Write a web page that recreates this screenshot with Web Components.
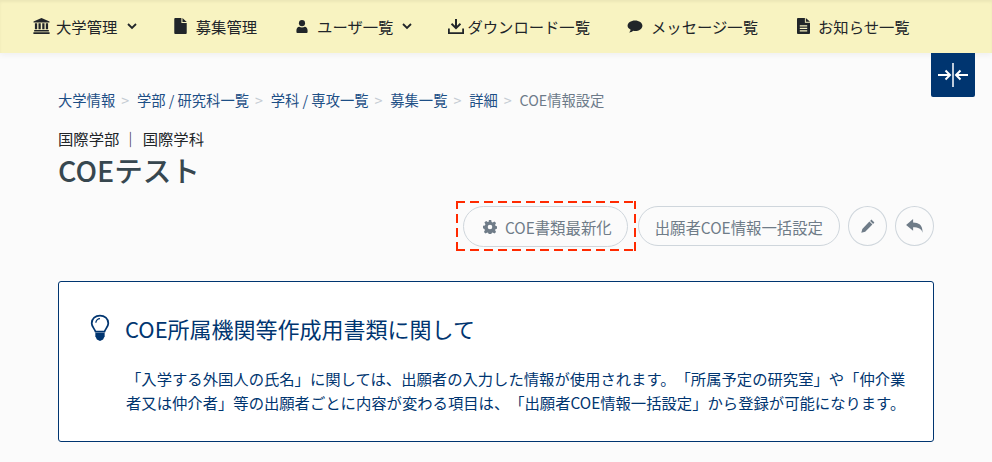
<!DOCTYPE html>
<html lang="ja">
<head>
<meta charset="utf-8">
<title>COE情報設定</title>
<style>
  html, body { margin: 0; padding: 0; }
  body {
    background: #fbfbfb;
    width: 992px;
    height: 462px;
    overflow: hidden;
    font-family: "Noto Sans CJK JP", "Noto Sans", sans-serif;
    color: #212529;
    text-spacing-trim: space-all;
  }
</style>
</head>
<body>
<top-nav>
  <nav-item icon="bank" gap="6" caret="3.4">大学管理</nav-item>
  <nav-item icon="file" gap="9" style="margin-left:37px">募集管理</nav-item>
  <nav-item icon="user" gap="9" caret="0" style="margin-left:39px">ユーザ一覧</nav-item>
  <nav-item icon="download" gap="3" style="margin-left:36px">ダウンロード一覧</nav-item>
  <nav-item icon="comment" gap="8" style="margin-left:37px">メッセージ一覧</nav-item>
  <nav-item icon="doc" gap="8" style="margin-left:39px">お知らせ一覧</nav-item>
</top-nav>
<page-main>
  <bread-crumbs>
    <a>大学情報</a><a>学部 / 研究科一覧</a><a>学科 / 専攻一覧</a><a>募集一覧</a><a>詳細</a><span>COE情報設定</span>
  </bread-crumbs>
  <page-title><span slot="sub">国際学部<i style="font-style:normal;margin:0 4.5px 0 3.5px">｜</i>国際学科</span>COEテスト</page-title>
  <action-bar>
    <highlight-box><pill-button icon="gear" style="height:41px">COE書類最新化</pill-button></highlight-box>
    <pill-button style="margin-left:2px">出願者COE情報一括設定</pill-button>
    <round-button icon="pencil" style="margin-left:8px"></round-button>
    <round-button icon="reply" style="margin-left:8px"></round-button>
  </action-bar>
  <info-box heading="COE所属機関等作成用書類に関して">「入学する外国人の氏名」に関しては、出願者の入力した情報が使用されます。「所属予定の研究室」や「仲介業者又は仲介者」等の出願者ごとに内容が変わる項目は、「出願者COE情報一括設定」から登録が可能になります。</info-box>
</page-main>
<script>
const ICONS = {
  bank: `<svg width="17" height="16" viewBox="0 0 18 17"><path fill="currentColor" d="M9 0 17.500 3.600v1.200H.5V3.600zM2 5.600h2.400v6.400H2zm3.800 0h2.400v6.400H5.800zm4 0h2.400v6.400H9.800zm3.800 0H16v6.400h-2.400zM1.200 12.800h15.600v1.600H1.200zM.4 15.200h17.200V17H.4z"/></svg>`,
  file: `<svg width="13" height="16" viewBox="0 0 14 18"><path fill="currentColor" d="M1 0h7v5.500h6V17a1 1 0 0 1-1 1H1a1 1 0 0 1-1-1V1a1 1 0 0 1 1-1zm8.200 0L14 4.400H9.200z"/></svg>`,
  user: `<svg width="12" height="13" viewBox="0 0 12 14"><circle fill="currentColor" cx="6" cy="3.400" r="3.300"/><path fill="currentColor" d="M3 7.400c1.800 1 4.200 1 6 0 1.900.2 3 1.800 3 4V13a1 1 0 0 1-1 1H1a1 1 0 0 1-1-1v-1.600c0-2.200 1.100-3.800 3-4z"/></svg>`,
  download: `<svg width="16" height="15" viewBox="0 0 16 15"><path fill="currentColor" d="M7 0h2v6.800l2.800-2.700 1.300 1.300L8 10.400 2.900 5.400l1.300-1.300L7 6.800zM0 9.500h1.800v3.700h12.400V9.500H16V15H0z"/></svg>`,
  comment: `<svg width="16" height="13" viewBox="0 0 16 14"><path fill="currentColor" d="M8 .5c4.400 0 8 2.500 8 5.700s-3.600 5.700-8 5.700c-.7 0-1.300 0-1.900-.2C4.800 12.800 3.300 13.500 1.600 13.500c.9-.9 1.500-2 1.700-3.100C1.300 9.300 0 7.900 0 6.200 0 3 3.600.5 8 .5z"/></svg>`,
  doc: `<svg width="13" height="16" viewBox="0 0 14 17"><path fill="currentColor" fill-rule="evenodd" d="M1 0h7.500v5H14v11a1 1 0 0 1-1 1H1a1 1 0 0 1-1-1V1a1 1 0 0 1 1-1zm8.500 0L14 4H9.500zM3 7.800v1.300h8V7.800zm0 2.700v1.300h8v-1.300zm0 2.700v1.300h8v-1.300z"/></svg>`,
  gear: `<svg width="14" height="14" viewBox="0 0 14 14"><path fill="currentColor" fill-rule="evenodd" d="M5.800 0h2.400l.4 1.900 1.100.5 1.700-1 1.700 1.700-1 1.700.5 1.100 1.900.4v2.400l-1.900.4-.5 1.100 1 1.700-1.700 1.700-1.700-1-1.100.5-.4 1.900H5.800l-.4-1.900-1.100-.5-1.700 1-1.700-1.700 1-1.700-.5-1.100L0 8.200V5.800l1.900-.4.5-1.100-1-1.700 1.700-1.700 1.700 1 1.100-.5zM7 4.700a2.300 2.300 0 1 0 0 4.600 2.300 2.300 0 0 0 0-4.600z"/></svg>`,
  pencil: `<svg width="14" height="14" viewBox="0 0 14 14"><path fill="currentColor" d="M10.400.6l3 3-1.300 1.300-3-3zM8.400 2.600l3 3-7.200 7.200-3.900 1 1-3.900z"/></svg>`,
  reply: `<svg width="17" height="14" viewBox="0 0 18 15"><path fill="currentColor" d="M7.500 0v3.700C13.200 3.800 18 6 17.600 14.600c-1.100-4.300-4.500-5.600-10.100-5.700v3.800L0 6.300z"/></svg>`
};

class TopNav extends HTMLElement {
  constructor() {
    super();
    this.attachShadow({ mode: "open" }).innerHTML = `
      <style>
        :host {
          display: flex;
          align-items: center;
          box-sizing: border-box;
          height: 53px;
          padding: 0 0 1px 33px;
          background: #f8f3c1;
          box-shadow: 0 2px 6px rgba(0,0,0,.05), inset 0 2px 3px rgba(0,0,0,.05);
        }
      </style>
      <slot></slot>`;
  }
}

class NavItem extends HTMLElement {
  constructor() {
    super();
    this.attachShadow({ mode: "open" });
  }
  connectedCallback() {
    const caret = this.hasAttribute("caret")
      ? `<svg class="caret" style="margin-left:${this.getAttribute("caret")}px" width="10" height="7" viewBox="0 0 10 7"><path fill="none" stroke="currentColor" stroke-width="1.800" d="M1 1l4 4 4-4"/></svg>` : "";
    this.shadowRoot.innerHTML = `
      <style>
        :host {
          display: inline-flex;
          align-items: center;
          gap: ${this.getAttribute("gap")}px;
          font-size: 15.33px;
          line-height: 20px;
          color: #212529;
          white-space: nowrap;
        }
        svg { display: block; flex: none; }
      </style>
      ${ICONS[this.getAttribute("icon")]}<slot></slot>${caret}`;
  }
}

class PageMain extends HTMLElement {
  constructor() {
    super();
    this.attachShadow({ mode: "open" }).innerHTML = `
      <style>
        :host { display: flex; flex-direction: column; padding: 35px 58px 0; position: relative; }
        .toggle {
          position: absolute; top: 0; right: 17px; width: 44px; height: 44px;
          background: #003570; border-radius: 0 0 2px 2px; color: #fff;
          display: flex; align-items: center; justify-content: center;
        }
      </style>
      <div class="toggle">
        <svg width="30" height="24" viewBox="0 0 30 24"><path fill="none" stroke="#fff" stroke-width="2" d="M0 12h12M7.500 7.500 12 12l-4.500 4.500M30 12H18M22.500 7.500 18 12l4.500 4.500"/><path stroke="#fff" stroke-width="1.500" d="M15 0v24"/></svg>
      </div>
      <slot></slot>`;
  }
}

class BreadCrumbs extends HTMLElement {
  constructor() {
    super();
    this.attachShadow({ mode: "open" }).innerHTML = `
      <style>
        :host { display: flex; align-items: center; height: 22px; font-size: 14.3px; white-space: nowrap; color: #6c7a89; }
        ::slotted(a) { color: #1d4f86; }
        ::slotted(a)::after { content: ">"; color: #c5ccd3; margin: 0 7.8px 0 6px; }
      </style>
      <slot></slot>`;
  }
}

class PageTitle extends HTMLElement {
  constructor() {
    super();
    this.attachShadow({ mode: "open" }).innerHTML = `
      <style>
        :host { display: block; margin-top: 17px; }
        .sub { font-size: 15.33px; line-height: 22px; color: #212529; }
        h1 { margin: 1px 0 0; font-size: 28.6px; line-height: 40px; font-weight: 500; color: #37474f; }
      </style>
      <div class="sub"><slot name="sub"></slot></div>
      <h1><slot></slot></h1>`;
  }
}

class ActionBar extends HTMLElement {
  constructor() {
    super();
    this.attachShadow({ mode: "open" }).innerHTML = `
      <style>
        :host { display: flex; justify-content: flex-end; align-items: center; margin-top: 11px; height: 50px; }
      </style>
      <slot></slot>`;
  }
}

class HighlightBox extends HTMLElement {
  constructor() {
    super();
    this.attachShadow({ mode: "open" }).innerHTML = `
      <style>
        :host {
          display: flex; align-items: center; height: 50px; box-sizing: border-box; padding: 0 8px 0 7px;
          background:
            repeating-linear-gradient(90deg, #ff2a00 0 9px, transparent 9px 14px) top left / 100% 2px no-repeat,
            repeating-linear-gradient(90deg, #ff2a00 0 9px, transparent 9px 14px) bottom left / 100% 2px no-repeat,
            repeating-linear-gradient(0deg, #ff2a00 0 9px, transparent 9px 14px) top left / 2px 100% no-repeat,
            repeating-linear-gradient(0deg, #ff2a00 0 9px, transparent 9px 14px) top right / 2px 100% no-repeat;
        }
      </style>
      <slot></slot>`;
  }
}

class PillButton extends HTMLElement {
  constructor() {
    super();
    this.attachShadow({ mode: "open" });
  }
  connectedCallback() {
    const icon = this.getAttribute("icon");
    this.shadowRoot.innerHTML = `
      <style>
        :host {
          display: inline-flex; align-items: center; gap: 8px; height: 40px; box-sizing: border-box;
          padding: 1px ${icon ? 15 : 16}px 0 ${icon ? 19 : 16}px; border: 1px solid #cfd6dc; border-radius: 21px;
          font-size: 15.4px; color: #6f7c88; white-space: nowrap;
        }
        svg { display: block; }
      </style>
      ${icon ? ICONS[icon] : ""}<slot></slot>`;
  }
}

class RoundButton extends HTMLElement {
  constructor() {
    super();
    this.attachShadow({ mode: "open" });
  }
  connectedCallback() {
    this.shadowRoot.innerHTML = `
      <style>
        :host {
          display: inline-flex; align-items: center; justify-content: center; width: 39px; height: 40px;
          box-sizing: border-box; border: 1px solid #cfd6dc; border-radius: 50%; color: #6f7c88;
        }
        svg { display: block; }
      </style>
      ${ICONS[this.getAttribute("icon")]}`;
  }
}

class InfoBox extends HTMLElement {
  constructor() {
    super();
    this.attachShadow({ mode: "open" });
  }
  connectedCallback() {
    this.shadowRoot.innerHTML = `
      <style>
        :host {
          display: block; margin-top: 30px; height: 161px; box-sizing: border-box;
          border: 1px solid #003570; border-radius: 3px; background: #fff; color: #003570;
          padding: 28px 20px 0 31px;
        }
        .head { display: flex; align-items: center; gap: 15px; height: 36px; }
        h2 { margin: 0; font-size: 22px; font-weight: 400; line-height: 36px; }
        svg { display: block; }
        p { margin: 20px 0 0 36px; font-size: 15.33px; line-height: 24px; color: #003570; }
      </style>
      <div class="head">
        <svg width="20" height="28" viewBox="1 0 18 27"><path fill="none" stroke="currentColor" stroke-width="1.700" d="M10 1.500c4.400 0 8 3 8 7.300 0 3.300-2.600 5.200-3.700 8.200H5.700C4.600 14 2 12.100 2 8.800 2 4.500 5.600 1.500 10 1.500z"/><path fill="none" stroke="currentColor" stroke-width="1.200" d="M6 8.500c0-2.200 1.800-4 4-4"/><path fill="currentColor" d="M5.500 18h9v3.500l-1.500 3-3 1.500-3-1.500-1.500-3z"/></svg>
        <h2>${this.getAttribute("heading")}</h2>
      </div>
      <p><slot></slot></p>`;
  }
}

customElements.define("top-nav", TopNav);
customElements.define("nav-item", NavItem);
customElements.define("page-main", PageMain);
customElements.define("bread-crumbs", BreadCrumbs);
customElements.define("page-title", PageTitle);
customElements.define("action-bar", ActionBar);
customElements.define("highlight-box", HighlightBox);
customElements.define("pill-button", PillButton);
customElements.define("round-button", RoundButton);
customElements.define("info-box", InfoBox);
</script>
</body>
</html>
